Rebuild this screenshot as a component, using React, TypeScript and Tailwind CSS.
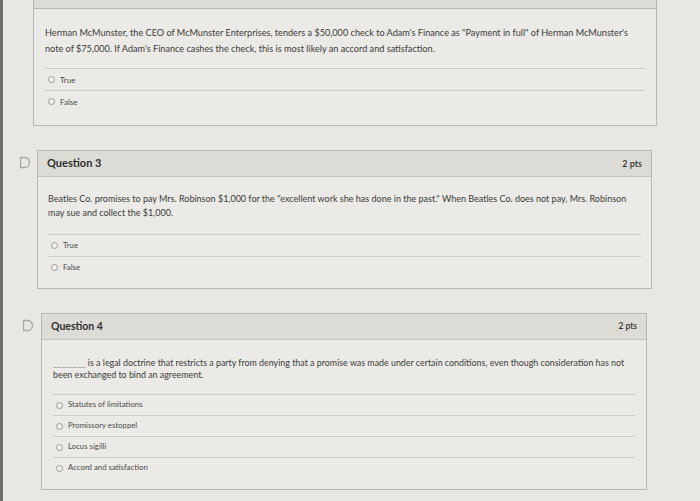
import React from 'react';

const FlagIcon = () => (
  <svg width="12" height="13" viewBox="0 0 12 13" className="shrink-0">
    <path d="M1.5 1.5 H6 A4.5 5 0 0 1 6 11.5 H1.5 Z" fill="none" stroke="#a9a8a4" strokeWidth="1.3" />
  </svg>
);

const Option = ({ label, h, size }: { label: string; h: string; size: string }) => (
  <div className={`flex items-center gap-[5px] border-t border-[#cfcec9] pl-[3px] ${h}`}>
    <span className="w-[7px] h-[7px] rounded-full border border-[#9a9995] bg-[#f2f1ee]" />
    <span className={`${size} text-[#4a4a48]`}>{label}</span>
  </div>
);

const App = () => {
  return (
    <div className="w-[700px] h-[501px] overflow-hidden bg-[#e8e7e3] flex" style={{ fontFamily: 'Lato, "Open Sans", sans-serif' }}>
      <div className="w-[3px] bg-[#6f6e6b]" />
      <div className="flex-1 flex flex-col">
        {/* Question 2 (continued) */}
        <div className="ml-[30px] w-[624px] border-x border-b border-[#b9b8b4] bg-[#dcdbd6] h-[9px]" />
        <div className="ml-[30px] w-[624px] border-x border-b border-[#b9b8b4] bg-[#ebeae6] px-[11px] pt-[16px] h-[117px]">
          <p className="text-[9.15px] leading-[16px] text-[#3b3b39] whitespace-nowrap">
            Herman McMunster, the CEO of McMunster Enterprises, tenders a $50,000 check to Adam's Finance as "Payment in full" of Herman McMunster's
            <br />
            note of $75,000. If Adam's Finance cashes the check, this is most likely an accord and satisfaction.
          </p>
          <div className="mt-[11px]">
            <Option label="True" h="h-[22px]" size="text-[8px]" />
            <Option label="False" h="h-[22px]" size="text-[8px]" />
          </div>
        </div>

        {/* Question 3 */}
        <div className="mt-[24px] flex items-start">
          <div className="w-[34px] flex justify-end pr-[6px] pt-[6px]">
            <FlagIcon />
          </div>
          <div className="w-[615px] border border-[#b9b8b4]">
            <div className="h-[26px] bg-[#dcdbd6] border-b border-[#c4c3bf] flex items-center justify-between px-[9px]">
              <span className="text-[11px] font-bold text-[#2f2f2e]">Question 3</span>
              <span className="text-[9px] font-semibold text-[#2f2f2e]">2 pts</span>
            </div>
            <div className="bg-[#ebeae6] px-[10px] pt-[15px] h-[111px]">
              <p className="text-[9px] leading-[14px] text-[#3b3b39] whitespace-nowrap">
                Beatles Co. promises to pay Mrs. Robinson $1,000 for the "excellent work she has done in the past." When Beatles Co. does not pay, Mrs. Robinson
                <br />
                may sue and collect the $1,000.
              </p>
              <div className="mt-[14px]">
                <Option label="True" h="h-[22px]" size="text-[7.8px]" />
                <Option label="False" h="h-[22px]" size="text-[7.8px]" />
              </div>
            </div>
          </div>
        </div>

        {/* Question 4 */}
        <div className="mt-[24px] flex items-start">
          <div className="w-[38px] flex justify-end pr-[7px] pt-[6px]">
            <FlagIcon />
          </div>
          <div className="w-[606px] border border-[#b9b8b4]">
            <div className="h-[26px] bg-[#dcdbd6] border-b border-[#c4c3bf] flex items-center justify-between px-[9px]">
              <span className="text-[10.5px] font-bold text-[#2f2f2e]">Question 4</span>
              <span className="text-[8.5px] font-semibold text-[#2f2f2e]">2 pts</span>
            </div>
            <div className="bg-[#ebeae6] px-[11px] pt-[17px] h-[149px]">
              <p className="text-[8.9px] leading-[12px] text-[#3b3b39] whitespace-nowrap">
                <span className="text-[#8a8985]">________</span> is a legal doctrine that restricts a party from denying that a promise was made under certain conditions, even though consideration has not
                <br />
                been exchanged to bind an agreement.
              </p>
              <div className="mt-[13px]">
                <Option label="Statutes of limitations" h="h-[21px]" size="text-[7.8px]" />
                <Option label="Promissory estoppel" h="h-[21px]" size="text-[7.8px]" />
                <Option label="Locus sigilli" h="h-[21px]" size="text-[7.8px]" />
                <Option label="Accord and satisfaction" h="h-[21px]" size="text-[7.8px]" />
              </div>
            </div>
          </div>
        </div>
      </div>
    </div>
  );
};

export default App;
